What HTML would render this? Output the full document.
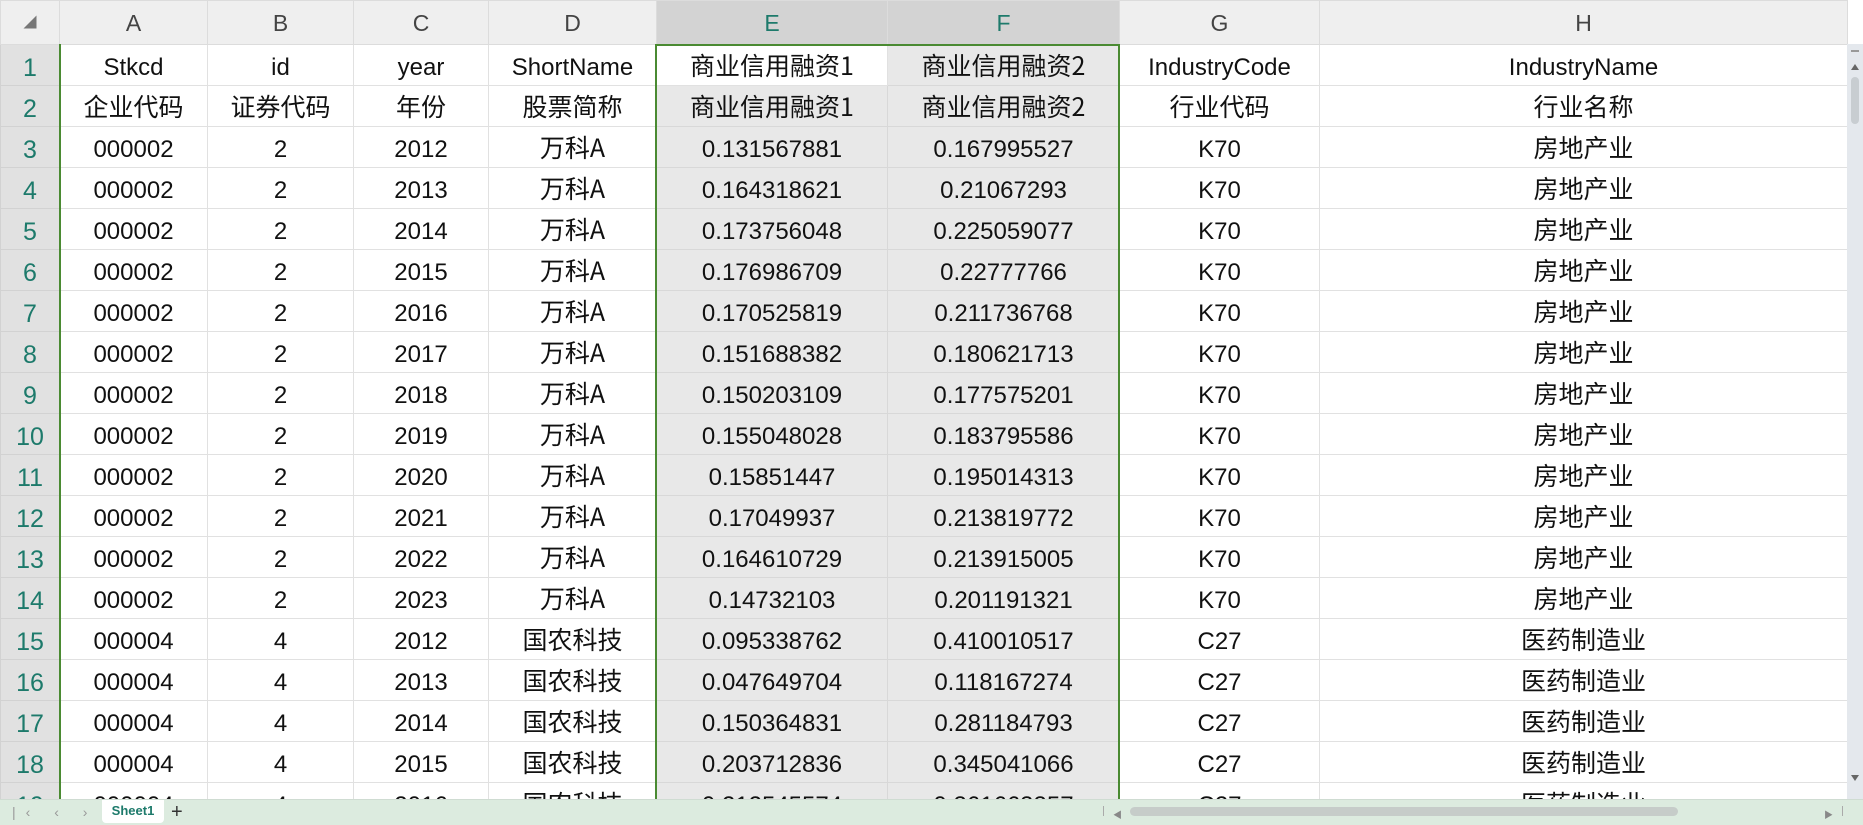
<!DOCTYPE html>
<html><head><meta charset="utf-8">
<style>
*{margin:0;padding:0;box-sizing:border-box}
body{width:1863px;height:825px;overflow:hidden;background:#fff;font-family:"Liberation Sans","Noto Sans CJK SC",sans-serif;position:relative}
table{border-collapse:collapse;table-layout:fixed;position:absolute;left:0;top:0}
td{height:41px;line-height:34px;border:1px solid #e1e1e1;text-align:center;font-size:24px;color:#111;white-space:nowrap;overflow:hidden;padding:5px 0 0 0;vertical-align:middle}
td.c{font-family:"Noto Sans CJK SC",sans-serif;font-size:25px;line-height:38px;padding:0}
tr.h td{height:44px;padding:0;line-height:40px;background:#efefef;color:#444;font-size:23px;border-color:#dcdcdc}
tr.h td.s{background:#d3d3d3;color:#1d7a6b}
td.rn{background:#e1e1e1;color:#1d7a6b;border-color:#d2d2d2;font-size:25px}
td.g{background:#e8e8e8;border-color:#d8d8d8}
td.w{background:#fff}
.sel{position:absolute;left:655px;top:44px;width:465px;height:760px;border:2px solid #4a8a32;pointer-events:none}
.bar{position:absolute;left:0;top:799px;width:1863px;height:26px;background:#dcebdf;border-top:1px solid #cfdcd2}
.vs{position:absolute;left:1847px;top:44px;width:16px;height:755px;background:#e4e8ed}
</style></head><body>
<table>
<colgroup><col style="width:59px"><col style="width:148px"><col style="width:146px"><col style="width:135px"><col style="width:168px"><col style="width:231px"><col style="width:232px"><col style="width:200px"><col style="width:528px"></colgroup>
<tr class="h"><td style="font-size:13px;color:#777">◢</td><td>A</td><td>B</td><td>C</td><td>D</td><td class="s">E</td><td class="s">F</td><td>G</td><td>H</td></tr>
<tr><td class="rn">1</td><td>Stkcd</td><td>id</td><td>year</td><td>ShortName</td><td class="w c">商业信用融资1</td><td class="g c">商业信用融资2</td><td>IndustryCode</td><td>IndustryName</td></tr>
<tr><td class="rn">2</td><td class="c">企业代码</td><td class="c">证券代码</td><td class="c">年份</td><td class="c">股票简称</td><td class="g c">商业信用融资1</td><td class="g c">商业信用融资2</td><td class="c">行业代码</td><td class="c">行业名称</td></tr>
<tr><td class="rn">3</td><td>000002</td><td>2</td><td>2012</td><td class="c">万科A</td><td class="g">0.131567881</td><td class="g">0.167995527</td><td>K70</td><td class="c">房地产业</td></tr>
<tr><td class="rn">4</td><td>000002</td><td>2</td><td>2013</td><td class="c">万科A</td><td class="g">0.164318621</td><td class="g">0.21067293</td><td>K70</td><td class="c">房地产业</td></tr>
<tr><td class="rn">5</td><td>000002</td><td>2</td><td>2014</td><td class="c">万科A</td><td class="g">0.173756048</td><td class="g">0.225059077</td><td>K70</td><td class="c">房地产业</td></tr>
<tr><td class="rn">6</td><td>000002</td><td>2</td><td>2015</td><td class="c">万科A</td><td class="g">0.176986709</td><td class="g">0.22777766</td><td>K70</td><td class="c">房地产业</td></tr>
<tr><td class="rn">7</td><td>000002</td><td>2</td><td>2016</td><td class="c">万科A</td><td class="g">0.170525819</td><td class="g">0.211736768</td><td>K70</td><td class="c">房地产业</td></tr>
<tr><td class="rn">8</td><td>000002</td><td>2</td><td>2017</td><td class="c">万科A</td><td class="g">0.151688382</td><td class="g">0.180621713</td><td>K70</td><td class="c">房地产业</td></tr>
<tr><td class="rn">9</td><td>000002</td><td>2</td><td>2018</td><td class="c">万科A</td><td class="g">0.150203109</td><td class="g">0.177575201</td><td>K70</td><td class="c">房地产业</td></tr>
<tr><td class="rn">10</td><td>000002</td><td>2</td><td>2019</td><td class="c">万科A</td><td class="g">0.155048028</td><td class="g">0.183795586</td><td>K70</td><td class="c">房地产业</td></tr>
<tr><td class="rn">11</td><td>000002</td><td>2</td><td>2020</td><td class="c">万科A</td><td class="g">0.15851447</td><td class="g">0.195014313</td><td>K70</td><td class="c">房地产业</td></tr>
<tr><td class="rn">12</td><td>000002</td><td>2</td><td>2021</td><td class="c">万科A</td><td class="g">0.17049937</td><td class="g">0.213819772</td><td>K70</td><td class="c">房地产业</td></tr>
<tr><td class="rn">13</td><td>000002</td><td>2</td><td>2022</td><td class="c">万科A</td><td class="g">0.164610729</td><td class="g">0.213915005</td><td>K70</td><td class="c">房地产业</td></tr>
<tr><td class="rn">14</td><td>000002</td><td>2</td><td>2023</td><td class="c">万科A</td><td class="g">0.14732103</td><td class="g">0.201191321</td><td>K70</td><td class="c">房地产业</td></tr>
<tr><td class="rn">15</td><td>000004</td><td>4</td><td>2012</td><td class="c">国农科技</td><td class="g">0.095338762</td><td class="g">0.410010517</td><td>C27</td><td class="c">医药制造业</td></tr>
<tr><td class="rn">16</td><td>000004</td><td>4</td><td>2013</td><td class="c">国农科技</td><td class="g">0.047649704</td><td class="g">0.118167274</td><td>C27</td><td class="c">医药制造业</td></tr>
<tr><td class="rn">17</td><td>000004</td><td>4</td><td>2014</td><td class="c">国农科技</td><td class="g">0.150364831</td><td class="g">0.281184793</td><td>C27</td><td class="c">医药制造业</td></tr>
<tr><td class="rn">18</td><td>000004</td><td>4</td><td>2015</td><td class="c">国农科技</td><td class="g">0.203712836</td><td class="g">0.345041066</td><td>C27</td><td class="c">医药制造业</td></tr>
<tr><td class="rn">19</td><td>000004</td><td>4</td><td>2016</td><td class="c">国农科技</td><td class="g">0.212545574</td><td class="g">0.361663357</td><td>C27</td><td class="c">医药制造业</td></tr>
</table>
<div class="sel"></div>
<div style="position:absolute;left:59px;top:44px;width:2px;height:755px;background:#4a8a32"></div>
<div class="vs">
  <div style="position:absolute;left:4px;top:6px;width:8px;height:2px;background:#999"></div>
  <div style="position:absolute;left:4px;top:20px;width:0;height:0;border-left:4px solid transparent;border-right:4px solid transparent;border-bottom:6px solid #666"></div>
  <div style="position:absolute;left:4px;top:33px;width:8px;height:47px;background:#c8cdd1;border-radius:4px"></div>
  <div style="position:absolute;left:4px;top:731px;width:0;height:0;border-left:4px solid transparent;border-right:4px solid transparent;border-top:6px solid #666"></div>
</div>
<div class="bar">
  <div style="position:absolute;left:12px;top:4px;font-size:14px;color:#999;letter-spacing:10px">|‹ ‹ › ›|</div>
  <div style="position:absolute;left:102px;top:0;width:62px;height:23px;background:#fff;border-radius:0 0 4px 4px;text-align:center;font-size:13px;font-weight:bold;color:#1d7a6b;line-height:21px">Sheet1</div>
  <div style="position:absolute;left:171px;top:0;font-size:20px;color:#333;line-height:24px">+</div>
  <div style="position:absolute;left:1103px;top:6px;width:1px;height:10px;background:#aaa"></div>
  <div style="position:absolute;left:1113px;top:8px;font-size:9px;color:#888">◀</div>
  <div style="position:absolute;left:1130px;top:7px;width:548px;height:9px;background:#c6ccc9;border-radius:5px"></div>
  <div style="position:absolute;left:1824px;top:8px;font-size:9px;color:#888">▶</div>
  <div style="position:absolute;left:1842px;top:6px;width:1px;height:10px;background:#aaa"></div>
</div>
</body></html>
